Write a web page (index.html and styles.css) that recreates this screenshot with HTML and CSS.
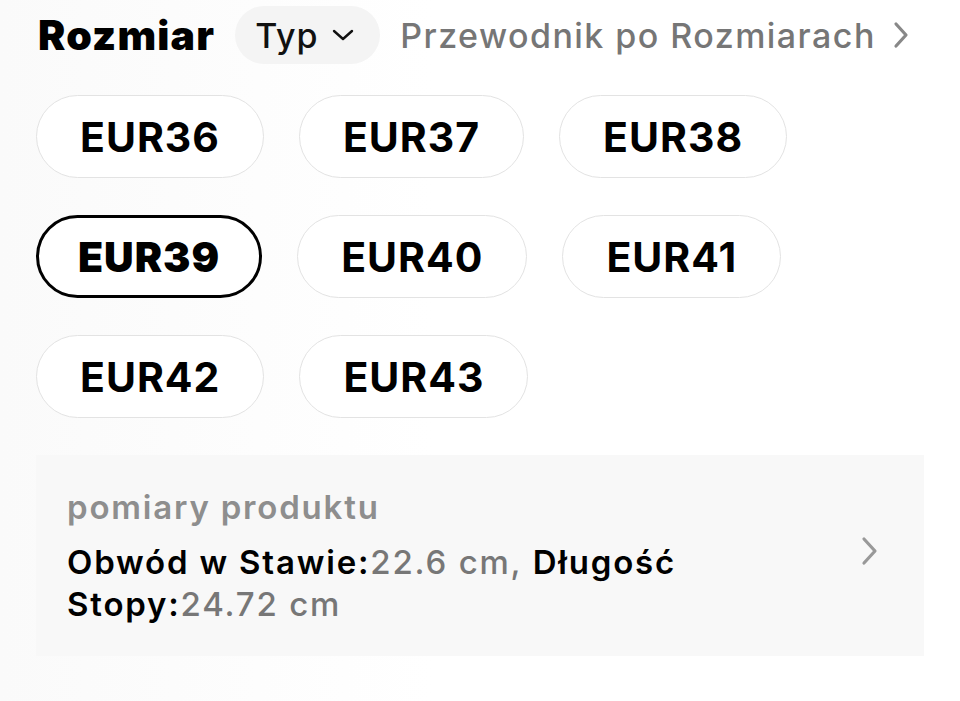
FILE: index.html
```html
<!DOCTYPE html>
<html lang="pl">
<head>
<meta charset="utf-8">
<link rel="stylesheet" href="styles.css">
</head>
<body>
<div class="page">
  <div class="header">
    <h1 class="title">Rozmiar</h1>
    <button class="type-pill">Typ
      <svg class="chev-down" width="22" height="14" viewBox="0 0 22 14"><path d="M2 3 L11 11 L20 3" fill="none" stroke="#111" stroke-width="2.4" stroke-linecap="round" stroke-linejoin="round"/></svg>
    </button>
    <a class="guide">Przewodnik po Rozmiarach
      <svg class="chev-right" width="18" height="28" viewBox="0 0 18 28"><path d="M4 3 L14 14 L4 25" fill="none" stroke="#888" stroke-width="3.2" stroke-linecap="round" stroke-linejoin="round"/></svg>
    </a>
  </div>
  <div class="sizes">
    <div class="size-row">
      <span class="chip">EUR36</span>
      <span class="chip">EUR37</span>
      <span class="chip">EUR38</span>
    </div>
    <div class="size-row">
      <span class="chip selected">EUR39</span>
      <span class="chip">EUR40</span>
      <span class="chip">EUR41</span>
    </div>
    <div class="size-row">
      <span class="chip">EUR42</span>
      <span class="chip">EUR43</span>
    </div>
  </div>
  <div class="info">
    <div class="info-text">
      <div class="info-label">pomiary produktu</div>
      <p class="info-values"><b>Obwód w Stawie:</b>22.6 cm, <b>Długość Stopy:</b>24.72 cm</p>
    </div>
    <svg class="info-chev" width="20" height="30" viewBox="0 0 20 30"><path d="M4 3 L15 15 L4 27" fill="none" stroke="#999" stroke-width="3.2" stroke-linecap="round" stroke-linejoin="round"/></svg>
  </div>
</div>
</body>
</html>
```

FILE: styles.css
```css
* { box-sizing: border-box; }
html, body { margin: 0; padding: 0; background: #fff; }
body { font-family: Inter, "Noto Sans", sans-serif; color: #000; }
.page { width: 960px; height: 701px; padding: 6px 36px 0 36px; background: linear-gradient(90deg, #fafafa 0%, #ffffff 45%); }
.header { display: flex; align-items: center; height: 58px; }
.title { margin: 0 0 0 2px; font-size: 41px; font-weight: 900; letter-spacing: 1.2px; line-height: 58px; }
.type-pill { margin-left: 20px; height: 58px; padding: 0 26px 0 20px; border: none; border-radius: 29px; background: #f4f4f4; font-family: inherit; font-size: 34px; font-weight: 500; letter-spacing: 0.8px; color: #111; display: flex; align-items: center; gap: 14px; }
.guide { margin-left: 20px; font-size: 34px; font-weight: 500; letter-spacing: 1.45px; color: #767676; display: flex; align-items: center; gap: 16px; }
.sizes { margin-top: 31px; display: flex; flex-direction: column; gap: 37px; }
.size-row { display: flex; gap: 35px; }
.chip { height: 83px; padding: 0 43px; border: 1.5px solid #e3e3e3; border-radius: 42px; display: flex; align-items: center; justify-content: center; font-size: 41px; font-weight: 700; letter-spacing: 1px; background: #fff; }
.chip.selected { border: 3px solid #000; font-weight: 900; padding: 0 39px; }
.info { margin-top: 37px; height: 201px; background: #f8f8f8; display: flex; align-items: center; padding: 0 44px 0 31px; }
.info-text { width: 720px; }
.info-label { font-size: 33px; font-weight: 600; letter-spacing: 1.8px; color: #8e8e8e; line-height: 42px; margin-bottom: 13px; }
.info-values { margin: 0; font-size: 33px; line-height: 42px; font-weight: 500; letter-spacing: 1.8px; color: #777; }
.info-values b { font-weight: 600; color: #000; }
.info-chev { margin-left: auto; margin-top: -10px; }
```
